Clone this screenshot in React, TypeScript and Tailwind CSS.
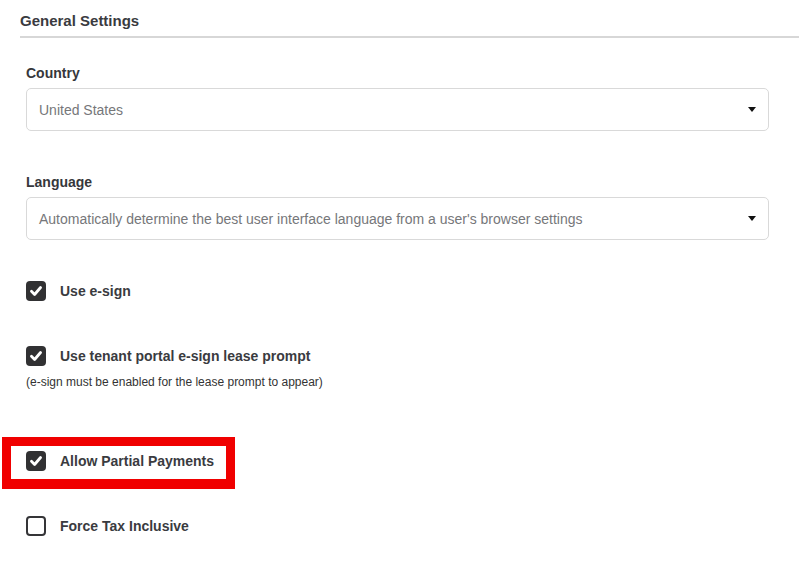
import React from 'react';

const CheckMark = () => (
    <svg viewBox="0 0 20 20" className="w-[14px] h-[14px]" fill="none">
        <path d="M3.5 10.5 L8 15 L16.5 5" stroke="white" strokeWidth="4" strokeLinecap="round" strokeLinejoin="round" />
    </svg>
);

function Checkbox({ checked }: { checked: boolean }) {
    if (checked) {
        return (
            <span className="w-5 h-5 shrink-0 rounded-[4px] bg-[#313133] flex items-center justify-center">
                <CheckMark />
            </span>
        );
    }
    return <span className="w-5 h-5 shrink-0 rounded-[4px] border-2 border-[#353538] bg-white" />;
}

function CheckRow({ label, checked }: { label: string; checked: boolean }) {
    return (
        <label className="flex items-center gap-[14px] h-5">
            <Checkbox checked={checked} />
            <span className="text-[14px] font-bold text-[#3a3b3f] leading-5">{label}</span>
        </label>
    );
}

function SelectBox({ value }: { value: string }) {
    return (
        <div className="h-[43px] border border-[#d9d9d9] rounded-[5px] flex items-center justify-between pl-[12px] pr-[12px]">
            <span className="text-[14px] text-[#76777a] pt-[1px]">{value}</span>
            <svg viewBox="0 0 8 5" className="w-[8px] h-[5px]">
                <path d="M0 0 L8 0 L4 5 Z" fill="#111" />
            </svg>
        </div>
    );
}

export default function App() {
    return (
        <div className="min-h-[563px] bg-white pl-5 font-['Liberation_Sans',Arial,sans-serif]">
            {/* Header */}
            <div className="pt-[12px] pb-[6px] border-b-2 border-[#d7d7d7]">
                <h2 className="text-[15px] font-bold text-[#3a3b3f] leading-[18px]">General Settings</h2>
            </div>

            <div className="pl-[6px] pr-[30px]">
                <div className="mt-[25px]">
                    <div className="text-[14px] font-bold text-[#36373b] leading-5 mb-[5px]">Country</div>
                    <SelectBox value="United States" />
                </div>

                <div className="mt-[41px]">
                    <div className="text-[14px] font-bold text-[#36373b] leading-5 mb-[5px]">Language</div>
                    <SelectBox value="Automatically determine the best user interface language from a user's browser settings" />
                </div>

                <div className="mt-[41px]">
                    <CheckRow label="Use e-sign" checked />
                </div>

                <div className="mt-[45px]">
                    <CheckRow label="Use tenant portal e-sign lease prompt" checked />
                    <p className="mt-[9px] text-[12px] leading-[14px] text-[#333]">
                        (e-sign must be enabled for the lease prompt to appear)
                    </p>
                </div>

                {/* highlighted row */}
                <div className="mt-[48px] -ml-[24px] w-[233px] border-[9px] border-b-[10px] border-[#f00000] pl-[15px] pt-[5px] pb-[8px]">
                    <CheckRow label="Allow Partial Payments" checked />
                </div>

                <div className="mt-[27px]">
                    <CheckRow label="Force Tax Inclusive" checked={false} />
                </div>
            </div>
        </div>
    );
}
